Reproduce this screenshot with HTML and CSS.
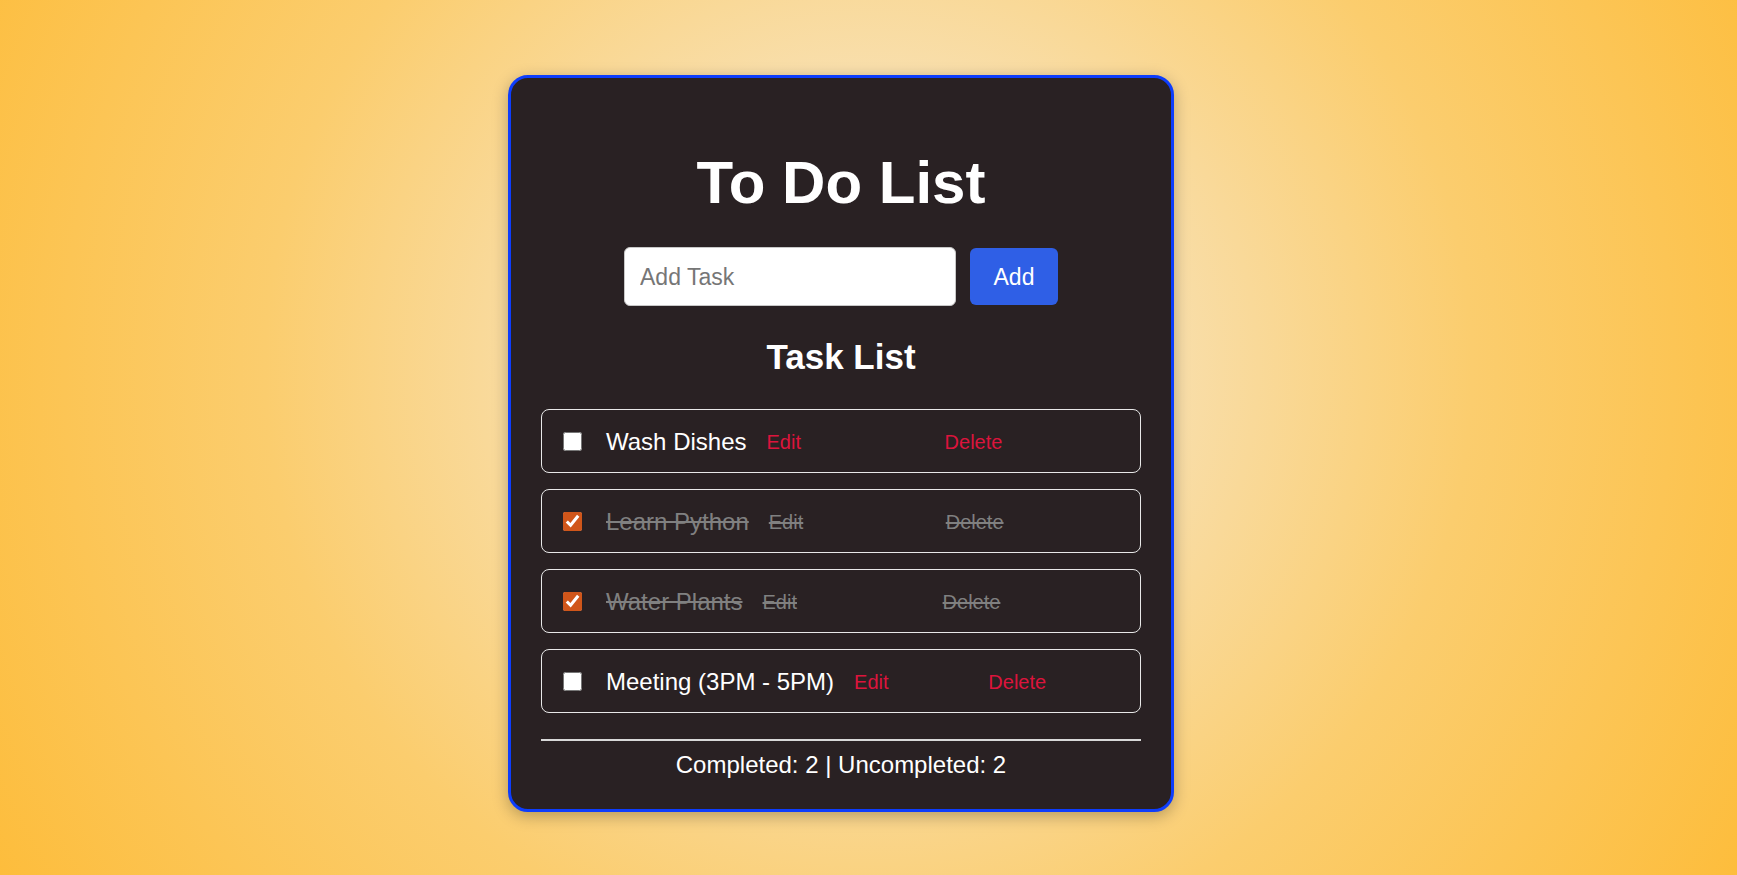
FILE: index.html
```html
<!DOCTYPE html>
<html lang="en">
<head>
<meta charset="UTF-8">
<title>To Do List</title>
<link rel="stylesheet" href="styles.css">
</head>
<body>
<div class="page">
  <div class="card">
    <h1 class="title">To Do List</h1>
    <div class="add-row">
      <input class="task-input" type="text" placeholder="Add Task">
      <button class="add-btn">Add</button>
    </div>
    <h2 class="subtitle">Task List</h2>
    <ul class="task-list">
      <li class="task">
        <input class="task-check" type="checkbox">
        <span class="task-text">Wash Dishes</span>
        <span class="task-edit">Edit</span>
        <span class="task-delete"><span>Delete</span></span>
      </li>
      <li class="task done">
        <input class="task-check" type="checkbox" checked>
        <span class="task-text">Learn Python</span>
        <span class="task-edit">Edit</span>
        <span class="task-delete"><span>Delete</span></span>
      </li>
      <li class="task done">
        <input class="task-check" type="checkbox" checked>
        <span class="task-text">Water Plants</span>
        <span class="task-edit">Edit</span>
        <span class="task-delete"><span>Delete</span></span>
      </li>
      <li class="task">
        <input class="task-check" type="checkbox">
        <span class="task-text">Meeting (3PM - 5PM)</span>
        <span class="task-edit">Edit</span>
        <span class="task-delete"><span>Delete</span></span>
      </li>
    </ul>
    <div class="divider"></div>
    <p class="summary">Completed: 2 | Uncompleted: 2</p>
  </div>
</div>
</body>
</html>
```
FILE: styles.css
```css
* { box-sizing: border-box; }
html, body { margin: 0; padding: 0; height: 100%; }
body {
  font-family: "Liberation Sans", Arial, sans-serif;
  background: radial-gradient(circle at 50% 42%, #f8e6c2 0%, #f8dfae 28%, #fbcd6e 60%, #fdbd3c 100%);
  background-attachment: fixed;
}
.page {
  display: flex;
  justify-content: center;
  padding: 75px 55px 0 0;
}
.card {
  width: 666px;
  padding: 30px;
  background: #292123;
  border: 3px solid #0d3dfc;
  border-radius: 20px;
  box-shadow: 0 4px 16px rgba(0, 0, 0, 0.28);
  color: #fff;
}
.title {
  margin: 40px 0 30px;
  font-size: 60px;
  line-height: 69px;
  font-weight: bold;
  text-align: center;
}
.add-row {
  display: flex;
  justify-content: center;
  align-items: center;
  gap: 14px;
  height: 59px;
}
.task-input {
  width: 332px;
  height: 59px;
  padding: 2px 15px 0;
  border: 1px solid #c8c8c8;
  border-radius: 6px;
  background: #fff;
  font-family: "Liberation Sans", Arial, sans-serif;
  font-size: 23px;
  color: #222;
  outline: none;
}
.task-input::placeholder { color: #767676; }
.add-btn {
  width: 88px;
  height: 57px;
  border: none;
  border-radius: 6px;
  background: #2f5fe6;
  color: #fff;
  font-family: "Liberation Sans", Arial, sans-serif;
  font-size: 23px;
  padding: 2px 0 0;
}
.subtitle {
  margin: 31px 0 32px;
  font-size: 35px;
  line-height: 40px;
  font-weight: bold;
  text-align: center;
}
.task-list {
  list-style: none;
  margin: 0;
  padding: 0;
  display: flex;
  flex-direction: column;
  gap: 16px;
}
.task {
  display: flex;
  align-items: center;
  height: 64px;
  padding: 0 12px 0 21px;
  border: 1px solid #e8e8e8;
  border-radius: 8px;
}
.task-check {
  width: 19px;
  height: 19px;
  margin: 0;
  accent-color: #d0561a;
  flex: none;
}
.task-text {
  margin: 2px 0 0 24px;
  font-size: 24px;
  line-height: 28px;
  white-space: nowrap;
}
.task-edit {
  margin: 2px 0 0 20px;
  font-size: 20px;
  line-height: 23px;
  color: #dc143c;
}
.task-delete {
  flex: 1;
  margin: 2px 0 0 18px;
  text-align: center;
  font-size: 20px;
  line-height: 23px;
  color: #dc143c;
}
.task.done .task-text,
.task.done .task-edit,
.task.done .task-delete span {
  color: #808080;
  text-decoration: line-through;
}
.divider {
  margin-top: 26px;
  height: 2px;
  background: #d8d8d8;
}
.summary {
  margin: 10px 0 0;
  font-size: 24px;
  line-height: 28px;
  text-align: center;
}
```
